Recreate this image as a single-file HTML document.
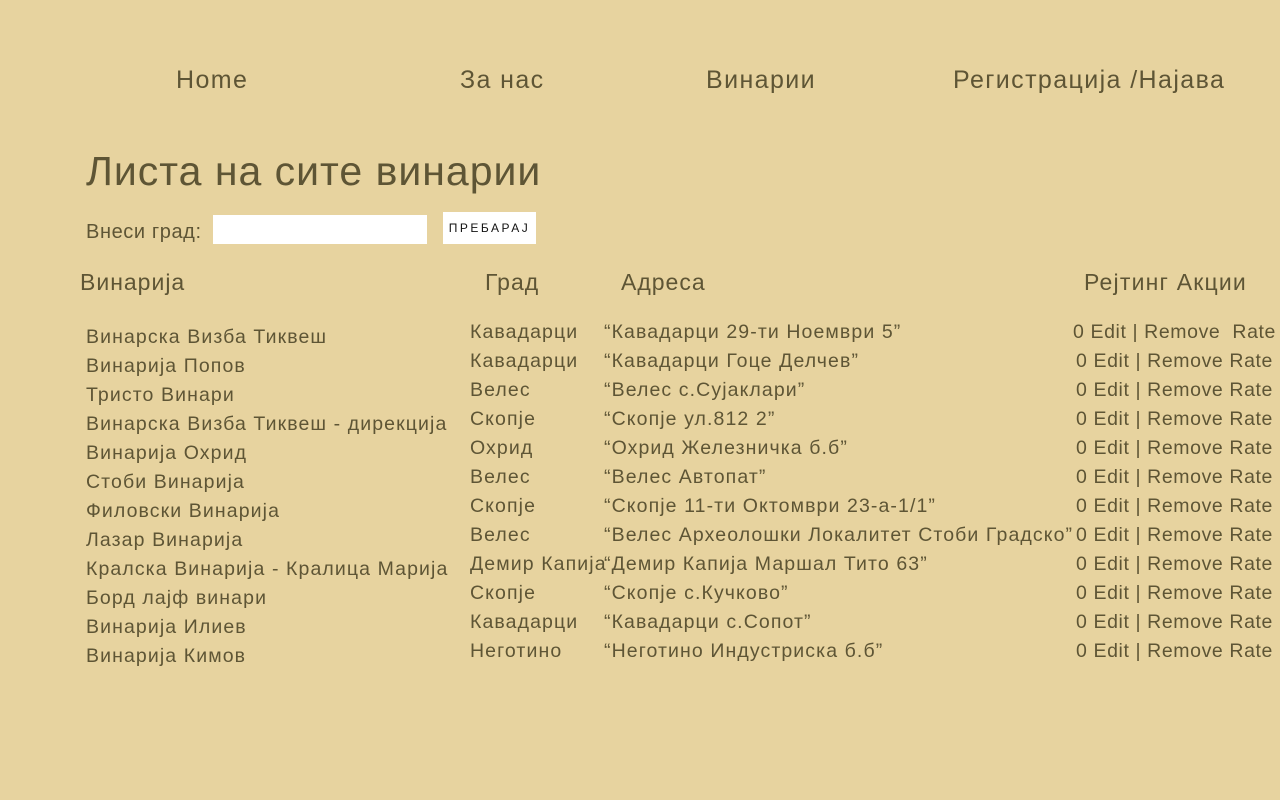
<!DOCTYPE html>
<html><head><meta charset="utf-8"><style>
body{margin:0;background:#e7d39f;color:#5e5535;font-family:"Liberation Sans",sans-serif;width:1280px;height:800px;position:relative;overflow:hidden}
.a{position:absolute;white-space:nowrap;line-height:1}
.nav{font-size:25px;top:68px;letter-spacing:1.4px}
.r{font-size:19.5px;letter-spacing:1.1px}
.e{letter-spacing:0.6px}
input{position:absolute;left:213px;top:215px;width:214px;height:29px;border:0;background:#fff;padding:0;margin:0}
.btn{position:absolute;left:443px;top:212px;width:93px;height:32px;background:#fff;color:#111;font-size:12px;letter-spacing:2.5px;text-align:center;line-height:32px}
</style></head><body>
<div class="a nav" style="left:176px">Home</div>
<div class="a nav" style="left:460px">За нас</div>
<div class="a nav" style="left:706px">Винарии</div>
<div class="a nav" style="left:953px">Регистрација /Најава</div>
<div class="a" style="left:86px;top:151px;font-size:41px;letter-spacing:1px">Листа на сите винарии</div>
<div class="a" style="left:86px;top:222px;font-size:20px;letter-spacing:0.6px">Внеси град:</div>
<input>
<div class="btn">ПРЕБАРАЈ</div>
<div class="a" style="left:80px;top:271px;font-size:23px;letter-spacing:1px">Винарија</div>
<div class="a" style="left:485px;top:271px;font-size:23px;letter-spacing:1px">Град</div>
<div class="a" style="left:621px;top:271px;font-size:23px;letter-spacing:1px">Адреса</div>
<div class="a" style="left:1084px;top:271px;font-size:23px;letter-spacing:1.2px">Рејтинг Акции</div>
<div id="rows"></div>
<script>
var d=[["Винарска Визба Тиквеш","Кавадарци","“Кавадарци 29-ти Ноември 5”"],
["Винарија Попов","Кавадарци","“Кавадарци Гоце Делчев”"],
["Тристо Винари","Велес","“Велес с.Сујаклари”"],
["Винарска Визба Тиквеш - дирекција","Скопје","“Скопје ул.812 2”"],
["Винарија Охрид","Охрид","“Охрид Железничка б.б”"],
["Стоби Винарија","Велес","“Велес Автопат”"],
["Филовски Винарија","Скопје","“Скопје 11-ти Октомври 23-а-1/1”"],
["Лазар Винарија","Велес","“Велес Археолошки Локалитет Стоби Градско”"],
["Кралска Винарија - Кралица Марија","Демир Капија","“Демир Капија Маршал Тито 63”"],
["Борд лајф винари","Скопје","“Скопје с.Кучково”"],
["Винарија Илиев","Кавадарци","“Кавадарци с.Сопот”"],
["Винарија Кимов","Неготино","“Неготино Индустриска б.б”"]];
var h="";
d.forEach(function(r,i){var y=327+i*29;
h+='<div class="a r" style="left:86px;top:'+(y+1)+'px">'+r[0]+'</div>';
h+='<div class="a r" style="left:470px;top:'+(y-4)+'px">'+r[1]+'</div>';
h+='<div class="a r" style="left:604px;top:'+(y-4)+'px">'+r[2]+'</div>';
h+='<div class="a r e" style="left:'+(i==0?1073:1076)+'px;top:'+(y-4)+'px">0 Edit | Remove '+(i==0?'&nbsp;':'')+'Rate</div>';});
document.getElementById("rows").innerHTML=h;
</script>
</body></html>
